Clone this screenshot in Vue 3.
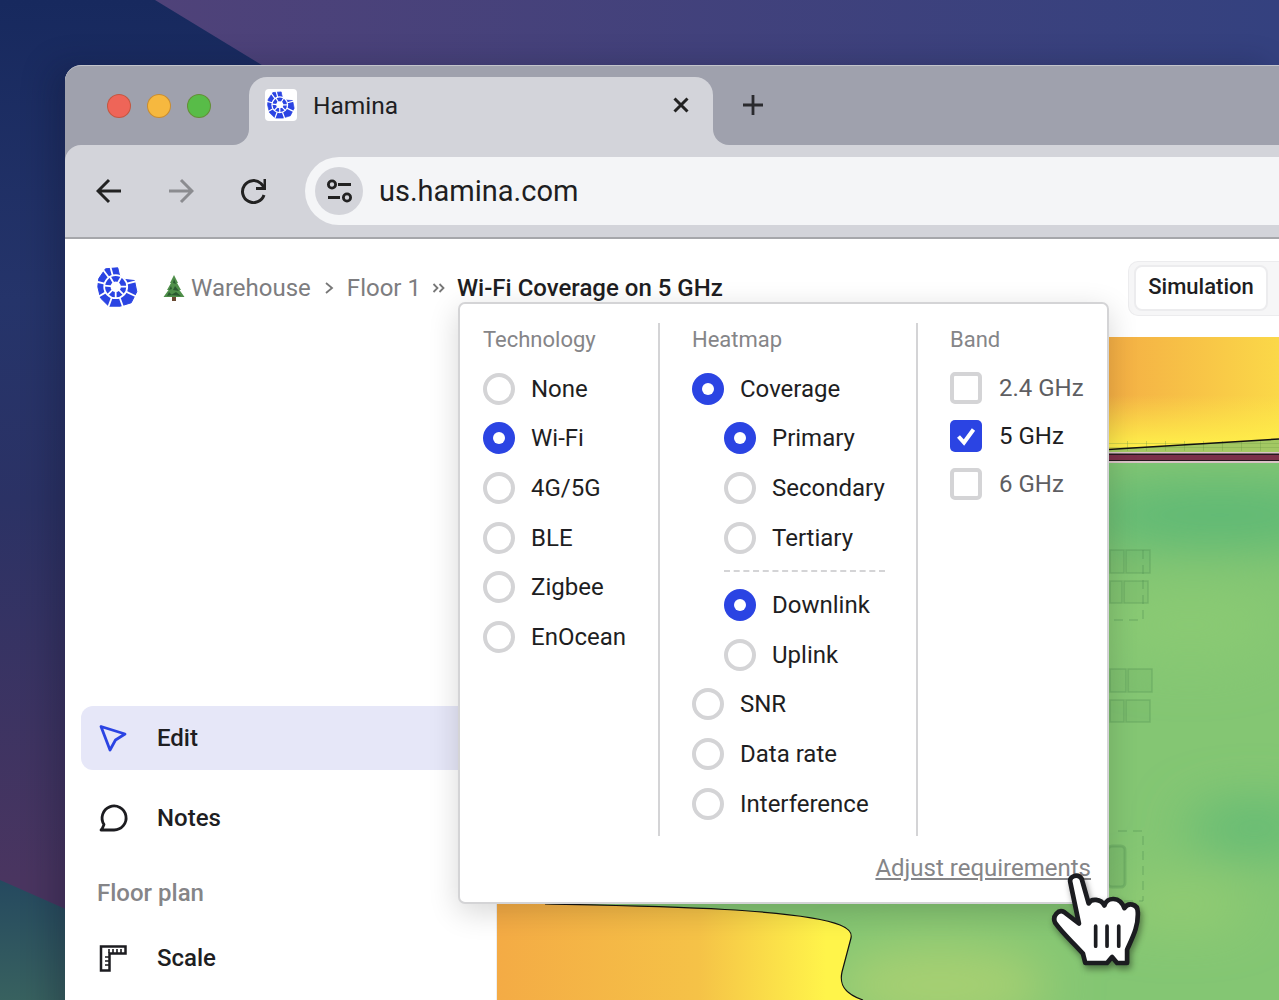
<script setup>
const technology = [
  { label: 'None' }, { label: 'Wi-Fi', on: true }, { label: '4G/5G' },
  { label: 'BLE' }, { label: 'Zigbee' }, { label: 'EnOcean' }
]
const signal = [{ label: 'Primary', on: true }, { label: 'Secondary' }, { label: 'Tertiary' }]
const direction = [{ label: 'Downlink', on: true }, { label: 'Uplink' }]
const otherMaps = [{ label: 'SNR' }, { label: 'Data rate' }, { label: 'Interference' }]
const bands = [{ label: '2.4 GHz' }, { label: '5 GHz', on: true }, { label: '6 GHz' }]
const cells = [
  [1110, 550, 14, 23], [1126, 550, 24, 23], [1110, 581, 12, 22], [1124, 581, 24, 22],
  [1110, 669, 16, 23], [1128, 669, 24, 23], [1110, 700, 14, 22], [1126, 700, 24, 22]
]
</script>

<template>
  <div class="desktop">
    <span class="wall-teal"></span>
    <svg class="defs" width="0" height="0" aria-hidden="true">
      <symbol id="hamina-logo" viewBox="0 0 41 40">
        <path fill="#2b44e3" stroke="#2b44e3" stroke-width="1" stroke-linejoin="round" d="M8.500 1.800 L20.800 .8 L22.500 8.500 L28 12.500 L37.500 13.500 L39.800 24.700 L34.200 35.800 L23 39.200 L11.800 39.200 L3.500 31 L.8 19.700 L1.800 11.500 Z" />
        <path fill="#fff" d="M21.500 0 L24 8 L29 11.500 L41 12.500 L41 0 Z" />
        <g fill="none" stroke="#fff" stroke-width="1.800">
          <circle cx="18.700" cy="19.700" r="11.500" />
          <path d="M15.700 8.600 L12.500 -3.500 M29.800 16.700 L42 13.500 M29 24.600 L40.300 30 M22.600 30.500 L26.900 42.300 M14.800 30.500 L10.500 42.300 M8.700 25.400 L-2.200 31.700 M7.500 16.700 L-4.600 13.500 M11.800 10.500 L4.300 .5" />
          <path d="M18.700 19.700 L24.400 9.700 M18.700 19.700 L30.200 19.700 M18.700 19.700 L26.800 27.800 M18.700 19.700 L18.700 31.200 M18.700 19.700 L10.600 27.800 M18.700 19.700 L7.200 18.600 M18.700 19.700 L13 9.700" />
        </g>
        <circle cx="18.700" cy="19.700" r="5.200" fill="#fff" />
      </symbol>
    </svg>

    <div class="window">
      <div class="tabstrip">
        <div class="lights">
          <span class="light red"></span>
          <span class="light yellow"></span>
          <span class="light green"></span>
        </div>
        <div class="tab-slot">
          <div class="tab">
            <span class="favicon"><svg width="28" height="28"><use href="#hamina-logo" /></svg></span>
            <span class="tab-title">Hamina</span>
            <svg class="tab-close" width="20" height="20" viewBox="0 0 20 20">
              <path d="M3.500 3.500 L16.500 16.500 M16.500 3.500 L3.500 16.500" fill="none" stroke="#222" stroke-width="3" />
            </svg>
          </div>
        </div>
        <div class="strip-rest">
          <svg width="24" height="24" viewBox="0 0 24 24">
            <path d="M12 2 V22 M2 12 H22" fill="none" stroke="#2a2a2e" stroke-width="2.800" />
          </svg>
        </div>
      </div>

      <div class="toolbar">
        <svg class="tool" width="26" height="26" viewBox="0 0 26 26">
          <path d="M25 13 H2 M13 2 L2 13 L13 24" fill="none" stroke="#222" stroke-width="3" />
        </svg>
        <svg class="tool" width="26" height="26" viewBox="0 0 26 26">
          <path d="M1 13 H24 M13 2 L24 13 L13 24" fill="none" stroke="#8b8c90" stroke-width="3" />
        </svg>
        <svg class="tool" width="26" height="26" viewBox="0 0 26 26">
          <path d="M24 17 A 11 11 0 1 1 21 5.500 L 24 9" fill="none" stroke="#222" stroke-width="3" />
          <path d="M25 1 V10.500 H16" fill="none" stroke="#222" stroke-width="3" />
        </svg>
        <div class="address">
          <span class="site-btn">
            <svg width="26" height="24" viewBox="0 0 26 24">
              <circle cx="6" cy="5.500" r="3.600" fill="none" stroke="#222" stroke-width="2.800" />
              <path d="M12 5.500 H25 M2 18.500 H14" fill="none" stroke="#222" stroke-width="2.800" />
              <circle cx="21" cy="18.500" r="3.600" fill="none" stroke="#222" stroke-width="2.800" />
            </svg>
          </span>
          <span class="url">us.hamina.com</span>
        </div>
      </div>

      <div class="page">
        <header class="page-head">
          <svg class="logo" width="41" height="40"><use href="#hamina-logo" /></svg>
          <nav class="crumbs">
            <svg class="tree" width="22" height="26" viewBox="0 0 22 26">
              <rect x="9" y="21" width="4" height="5" fill="#6a4a32" />
              <path d="M11 0 L15 8 L14 8 L18 15 L16.500 15 L21.500 22 L.5 22 L5.500 15 L4 15 L8 8 L7 8 Z" fill="#4f8f4a" />
              <path d="M11 4 L13 9 L10 8 Z M12 11 L16 16 L10 15 Z M13 17 L18 21 L8 20 Z M8 11 L9 14 L6 15 Z M6 17 L9 20 L4 21 Z" fill="#2a5a30" />
            </svg>
            <span class="crumb crumb-first">Warehouse</span>
            <svg class="sep sep-one" width="10" height="14" viewBox="0 0 10 14">
              <path d="M2 2 L8 7 L2 12" fill="none" stroke="#777" stroke-width="1.800" />
            </svg>
            <span class="crumb">Floor 1</span>
            <svg class="sep sep-two" width="13" height="12" viewBox="0 0 13 12">
              <path d="M1.500 2 L5.500 6 L1.500 10 M7.500 2 L11.500 6 L7.500 10" fill="none" stroke="#777" stroke-width="1.800" />
            </svg>
            <span class="crumb-current">Wi-Fi Coverage on 5 GHz</span>
          </nav>
          <div class="segments">
            <button class="segment">Simulation</button>
          </div>
        </header>

        <div class="workspace">
          <aside class="sidebar">
            <div class="side-row active">
              <svg width="32" height="32" viewBox="0 0 32 32">
                <path d="M4 4.500 L28 12 L18.500 18 L13 28 Z" fill="none" stroke="#2b44e3" stroke-width="2.800" stroke-linejoin="round" />
              </svg>
              <span>Edit</span>
            </div>
            <div class="side-row">
              <svg width="32" height="32" viewBox="0 0 32 32">
                <path d="M5.500 26 L7 22.500 A 12 12 0 1 1 17 28 L4 28 Z" fill="none" stroke="#1c1c20" stroke-width="2.800" stroke-linejoin="round" />
              </svg>
              <span>Notes</span>
            </div>
            <div class="side-label">Floor plan</div>
            <div class="side-row">
              <svg width="32" height="32" viewBox="0 0 32 32">
                <path d="M4 4.500 H28.500 V11.500 H12.500 V28.500 H4 Z" fill="none" stroke="#1c1c20" stroke-width="2.500" />
                <path d="M12 7 V11 M16 7 V11 M20 7 V11 M24 7 V11 M8 15 H12 M8 19 H12 M8 23 H12" fill="none" stroke="#1c1c20" stroke-width="1.600" />
              </svg>
              <span>Scale</span>
            </div>
          </aside>

          <main class="canvas">
            <svg class="map" viewBox="497 337 782 663" preserveAspectRatio="none">
              <defs>
                <linearGradient id="warm" x1="0" y1="0" x2="1" y2="0">
                  <stop offset="0" stop-color="#f4ab45" />
                  <stop offset=".55" stop-color="#f5c247" />
                  <stop offset=".9" stop-color="#fff44a" />
                  <stop offset="1" stop-color="#fff44a" />
                </linearGradient>
                <linearGradient id="warmTop" gradientUnits="userSpaceOnUse" x1="1108" y1="0" x2="1279" y2="0">
                  <stop offset="0" stop-color="#f4ae45" />
                  <stop offset="1" stop-color="#fbd848" />
                </linearGradient>
                <linearGradient id="warmFade" gradientUnits="userSpaceOnUse" x1="0" y1="395" x2="0" y2="448">
                  <stop offset="0" stop-color="#fff04a" stop-opacity="0" />
                  <stop offset="1" stop-color="#fff04a" />
                </linearGradient>
                <filter id="blur" x="-40%" y="-60%" width="180%" height="220%">
                  <feGaussianBlur stdDeviation="26" />
                </filter>
              </defs>
              <rect x="497" y="337" width="782" height="663" fill="#84c673" />
              <g filter="url(#blur)">
                <ellipse cx="1220" cy="515" rx="150" ry="32" fill="#5cb875" />
                <ellipse cx="1255" cy="828" rx="70" ry="24" fill="#5fb975" />
                <ellipse cx="1180" cy="905" rx="70" ry="18" fill="#98ce72" />
                <ellipse cx="940" cy="985" rx="110" ry="40" fill="#a8d072" />
                <ellipse cx="1190" cy="625" rx="90" ry="36" fill="#8aca73" />
              </g>
              <rect x="497" y="439" width="782" height="14" fill="#a3c863" />
              <path d="M497 337 H1279 V439 L1108 449.500 H497 Z" fill="url(#warmTop)" />
              <path d="M497 395 H1279 V439 L1108 449.500 H497 Z" fill="url(#warmFade)" />
              <path d="M1108 443.500 H1279 M1108 447.500 H1279" stroke="#6f9a45" stroke-opacity=".3" stroke-width="1" />
              <path d="M1108 446 H1279" stroke="#6f9a45" stroke-opacity=".35" stroke-width="10" stroke-dasharray="1 18" />
              <path d="M1108 449.500 L1279 439" stroke="#111" stroke-width="1.400" fill="none" />
              <rect x="497" y="452" width="782" height="11" fill="#d9c3c6" />
              <rect x="497" y="453.500" width="782" height="7.500" fill="#26181e" />
              <rect x="497" y="455" width="782" height="5" fill="#7b3049" />
              <g fill="#5f9e5c" fill-opacity=".14" stroke="#4d8c50" stroke-opacity=".3" stroke-width="1.500">
                <rect v-for="c in cells" :key="c.join()" :x="c[0]" :y="c[1]" :width="c[2]" :height="c[3]" />
              </g>
              <path d="M1143 550 V620 H1100 M1118 831 H1143 V901 H1100" fill="none" stroke="#4d8c50" stroke-opacity=".5" stroke-width="1" stroke-dasharray="9 6" />
              <rect x="1108" y="846" width="17" height="41" rx="4" fill="#5f9e5c" fill-opacity=".2" stroke="#4d8c50" stroke-opacity=".3" stroke-width="3" />
              <path d="M497 1000 V904 H545 C 640 906 800 908 840 925 C 850 929 852 933 851 938 L 842 972 C 839 985 845 994 863 1000 Z" fill="url(#warm)" />
              <path d="M545 904 C 640 906 800 908 840 925 C 850 929 852 933 851 938 L 842 972 C 839 985 845 994 863 1000" fill="none" stroke="#111" stroke-width="1.200" />
            </svg>
          </main>
        </div>

        <section class="popover">
          <div class="columns">
            <div class="col col-tech">
              <h4>Technology</h4>
              <label v-for="o in technology" :key="o.label" class="opt">
                <span class="radio" :class="{ on: o.on }"></span>{{ o.label }}
              </label>
            </div>
            <div class="col col-heat">
              <h4>Heatmap</h4>
              <label class="opt"><span class="radio on"></span>Coverage</label>
              <div class="nested">
                <label v-for="o in signal" :key="o.label" class="opt">
                  <span class="radio" :class="{ on: o.on }"></span>{{ o.label }}
                </label>
                <div class="dash"></div>
                <label v-for="o in direction" :key="o.label" class="opt">
                  <span class="radio" :class="{ on: o.on }"></span>{{ o.label }}
                </label>
              </div>
              <label v-for="o in otherMaps" :key="o.label" class="opt">
                <span class="radio"></span>{{ o.label }}
              </label>
            </div>
            <div class="col col-band">
              <h4>Band</h4>
              <label v-for="o in bands" :key="o.label" class="opt opt-band">
                <span class="check" :class="{ on: o.on }">
                  <svg v-if="o.on" width="24" height="24" viewBox="0 0 24 24">
                    <path d="M4.500 12.500 L10 18.500 L19.500 5.500" fill="none" stroke="#fff" stroke-width="4" />
                  </svg>
                </span>
                <span class="band-text" :class="{ muted: !o.on }">{{ o.label }}</span>
              </label>
            </div>
          </div>
          <a class="adjust">Adjust requirements</a>
        </section>
      </div>
    </div>

    <svg class="hand" viewBox="630 275 280 290" width="94" height="97">
      <path d="M690 308 C 686 292 712 280 724 298 L 745 372 C 752 356 782 358 792 378 C 800 352 838 350 852 386 C 862 368 892 372 892 398 C 894 440 878 470 860 510 L 860 550 L 830 550 L 815 532 L 800 550 L 735 550 L 728 522 C 700 490 670 465 645 430 C 635 410 655 388 672 398 L 716 432 Z" fill="#fff" stroke="#1b1c20" stroke-width="14" stroke-linejoin="round" />
      <path d="M766 440 V500 M800 440 V500 M835 440 V500" fill="none" stroke="#1b1c20" stroke-width="11" stroke-linecap="round" />
    </svg>
  </div>
</template>

<style scoped>
.desktop {
  position: relative;
  width: 1279px;
  height: 1000px;
  overflow: hidden;
  padding: 65px 0 0 65px;
  box-sizing: border-box;
  font-family: Roboto, "Liberation Sans", sans-serif;
  color: #1e1e22;
  background: linear-gradient(to bottom, #17295e 0, #25346a 300px, #2b3265 500px, #4a3560 880px, #4a3560 100%);
}
.desktop::after {
  content: "";
  position: absolute;
  left: 155px;
  top: 0;
  width: 1124px;
  height: 70px;
  background: linear-gradient(90deg, #4f4279, #34417f);
  clip-path: polygon(0 0, 100% 0, 100% 100%, 115px 100%);
}
.wall-teal {
  position: absolute;
  left: 0;
  top: 880px;
  width: 70px;
  height: 120px;
  background: linear-gradient(to bottom, #25495f, #38615f);
  clip-path: polygon(0 0, 100% 31px, 100% 100%, 0 100%);
}
.defs {
  position: absolute;
}
.window {
  position: relative;
  z-index: 1;
  height: 1000px;
  background: #9fa1ad;
  border-radius: 16px 0 0 0;
  border-top: 1px solid #c3c4cb;
  box-shadow: -14px 0 30px rgba(10, 14, 40, .25);
  overflow: hidden;
  box-sizing: border-box;
}
.tabstrip {
  display: flex;
  height: 79px;
  background: #d3d4da;
}
.lights {
  display: flex;
  gap: 16px;
  width: 184px;
  padding: 28px 0 0 42px;
  box-sizing: border-box;
  background: #9fa1ad;
  border-radius: 0 0 16px 0;
}
.light {
  width: 24px;
  height: 24px;
  border-radius: 50%;
  box-sizing: border-box;
  border: 1px solid rgba(120, 60, 20, .35);
}
.red { background: #ee6558; }
.yellow { background: #f6b83f; }
.green { background: #58bc48; }
.tab-slot {
  width: 464px;
  padding-top: 11px;
  background: #9fa1ad;
  box-sizing: border-box;
}
.tab {
  display: flex;
  align-items: center;
  height: 68px;
  padding: 0 22px 12px 16px;
  box-sizing: border-box;
  background: #d3d4da;
  border-radius: 18px 18px 0 0;
}
.favicon {
  display: flex;
  align-items: center;
  justify-content: center;
  width: 32px;
  height: 32px;
  background: #fff;
  border-radius: 4px;
}
.tab-title {
  margin-left: 16px;
  flex: 1;
  font-size: 24.500px;
}
.tab-close {
  display: block;
}
.strip-rest {
  flex: 1;
  display: flex;
  padding: 27px 0 0 28px;
  box-sizing: border-box;
  background: #9fa1ad;
  border-radius: 0 0 0 16px;
}
.toolbar {
  display: flex;
  align-items: center;
  height: 94px;
  padding: 0 0 0 31px;
  box-sizing: border-box;
  gap: 46px;
  background: #d3d4da;
  border-radius: 16px 0 0 0;
  border-bottom: 2px solid #a6a7ab;
}
.tool {
  flex: none;
}
.address {
  flex: 1;
  display: flex;
  align-items: center;
  height: 68px;
  margin-left: -7px;
  padding-left: 10px;
  background: #f4f5f7;
  border-radius: 34px 0 0 34px;
}
.site-btn {
  display: flex;
  align-items: center;
  justify-content: center;
  width: 48px;
  height: 48px;
  background: #d3d4da;
  border-radius: 50%;
}
.url {
  margin-left: 16px;
  font-size: 29px;
}
.page {
  position: relative;
  background: #fff;
  height: 762px;
  overflow: hidden;
}
.page-head {
  display: flex;
  align-items: center;
  height: 98px;
  padding: 0 0 0 32px;
  box-sizing: border-box;
}
.logo {
  flex: none;
  margin-top: -2px;
}
.crumbs {
  display: flex;
  align-items: center;
  flex: 1;
  margin-left: 25px;
  font-size: 24px;
  color: #7d7d80;
}
.crumb-first {
  margin-left: 6px;
}
.sep-one {
  margin: 0 13px;
}
.sep-two {
  margin: 0 12px 0 11px;
}
.crumb-current {
  color: #1e1e22;
  font-weight: 500;
}
.segments {
  width: 151px;
  height: 55px;
  padding: 3px 0 0 5px;
  box-sizing: border-box;
  background: #f6f6f7;
  border: 1px solid #ececee;
  border-right: 0;
  border-radius: 10px 0 0 10px;
}
.segment {
  display: block;
  width: 134px;
  height: 46px;
  padding: 0 0 2px;
  background: #fff;
  border: 2px solid #ececee;
  border-radius: 8px;
  font: 500 22px Roboto, "Liberation Sans", sans-serif;
  color: #1e1e22;
}
.workspace {
  display: flex;
  height: 664px;
}
.sidebar {
  width: 432px;
  flex: none;
  padding: 369px 0 0 16px;
  box-sizing: border-box;
  border-right: 1px solid #eeeeef;
}
.side-row {
  display: flex;
  align-items: center;
  gap: 28px;
  height: 64px;
  margin-bottom: 16px;
  padding-left: 16px;
  border-radius: 12px;
  font-size: 24px;
  font-weight: 500;
}
.side-row svg {
  flex: none;
}
.side-row.active {
  background: #e6e7f8;
}
.side-label {
  height: 63px;
  margin: -3px 0 0 16px;
  font-size: 24px;
  font-weight: 500;
  line-height: 60px;
  color: #858588;
}
.canvas {
  flex: 1;
  position: relative;
  overflow: hidden;
}
.map {
  display: block;
  width: 782px;
  height: 663px;
}
.popover {
  position: absolute;
  left: 393px;
  top: 63px;
  width: 651px;
  height: 602px;
  box-sizing: border-box;
  background: #fff;
  border: 2px solid #d4d4d6;
  border-radius: 7px;
  box-shadow: 0 8px 30px rgba(0, 0, 0, .16);
  font-size: 24px;
}
.columns {
  display: flex;
  height: 513px;
  margin-top: 19px;
}
.col {
  box-sizing: border-box;
}
.col-tech {
  width: 198px;
  padding-left: 23px;
}
.col-heat {
  width: 260px;
  padding-left: 32px;
  border-left: 2px solid #d4d4d6;
  border-right: 2px solid #d4d4d6;
}
.col-band {
  flex: 1;
  padding-left: 32px;
}
h4 {
  margin: 0 0 9px;
  height: 32px;
  line-height: 34px;
  font-size: 22px;
  font-weight: 400;
  color: #858588;
}
.opt {
  display: flex;
  align-items: center;
  gap: 16px;
  height: 49.600px;
}
.opt-band {
  height: 48px;
  gap: 17px;
}
.radio {
  flex: none;
  display: flex;
  align-items: center;
  justify-content: center;
  width: 32px;
  height: 32px;
  box-sizing: border-box;
  border: 4px solid #d4d4d6;
  border-radius: 50%;
}
.radio.on {
  border: 0;
  background: #2b44e3;
}
.radio.on::after {
  content: "";
  width: 12px;
  height: 12px;
  background: #fff;
  border-radius: 50%;
}
.check {
  flex: none;
  display: flex;
  align-items: center;
  justify-content: center;
  width: 32px;
  height: 32px;
  box-sizing: border-box;
  border: 4px solid #d4d4d6;
  border-radius: 5px;
}
.check.on {
  border: 0;
  background: #2b44e3;
}
.band-text.muted {
  color: #5e5e62;
}
.nested {
  padding-left: 32px;
}
.dash {
  width: 161px;
  height: 0;
  margin: 8px 0 8px;
  border-top: 2px dashed #d4d4d6;
}
.adjust {
  position: absolute;
  right: 16px;
  top: 550px;
  font-size: 24px;
  color: #858588;
  text-decoration: underline;
}
.hand {
  position: absolute;
  z-index: 2;
  left: 1050px;
  top: 871px;
  filter: drop-shadow(2px 4px 3px rgba(0, 0, 0, .4));
}
</style>
